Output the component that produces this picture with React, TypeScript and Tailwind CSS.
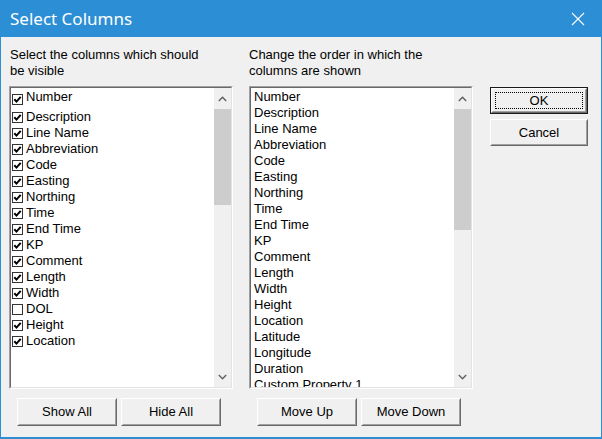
const leftItems: [string, boolean][] = [
  ["Number", true],
  ["Description", true],
  ["Line Name", true],
  ["Abbreviation", true],
  ["Code", true],
  ["Easting", true],
  ["Northing", true],
  ["Time", true],
  ["End Time", true],
  ["KP", true],
  ["Comment", true],
  ["Length", true],
  ["Width", true],
  ["DOL", false],
  ["Height", true],
  ["Location", true],
];

const rightItems = [
  "Number",
  "Description",
  "Line Name",
  "Abbreviation",
  "Code",
  "Easting",
  "Northing",
  "Time",
  "End Time",
  "KP",
  "Comment",
  "Length",
  "Width",
  "Height",
  "Location",
  "Latitude",
  "Longitude",
  "Duration",
  "Custom Property 1",
];

function Check({ on, first }: { on: boolean; first?: boolean }) {
  return (
    <div
      className={`w-[11px] h-[11px] border border-[#333] bg-white shrink-0 flex items-center justify-center ${
        first ? "mt-[5px]" : "mt-[3px]"
      }`}
    >
      {on && (
        <svg width="9" height="9" viewBox="0 0 9 9">
          <path d="M1.3 4.2 L3.5 6.6 L7.7 1.8" fill="none" stroke="#000" strokeWidth="2" />
        </svg>
      )}
    </div>
  );
}

function Scrollbar({ thumb }: { thumb: string }) {
  return (
    <div className="w-[17px] bg-[#f0f0f0] flex flex-col shrink-0">
      <div className="h-[21px] flex items-center justify-center">
        <svg width="9" height="6" viewBox="0 0 9 6">
          <path d="M0.8 5 L4.5 1.3 L8.2 5" fill="none" stroke="#606060" strokeWidth="1.4" />
        </svg>
      </div>
      <div className={`${thumb} bg-[#cdcdcd]`} />
      <div className="flex-1" />
      <div className="h-[21px] flex items-center justify-center">
        <svg width="9" height="6" viewBox="0 0 9 6">
          <path d="M0.8 1 L4.5 4.7 L8.2 1" fill="none" stroke="#606060" strokeWidth="1.4" />
        </svg>
      </div>
    </div>
  );
}

function ListBox({ children, thumb }: { children: React.ReactNode; thumb: string }) {
  return (
    <div className="w-[224px] h-[303px] border border-t-[#a0a0a0] border-l-[#a0a0a0] border-b-white border-r-white">
      <div className="h-full border border-t-[#696969] border-l-[#696969] border-b-[#e3e3e3] border-r-[#e3e3e3] flex">
        <div className="flex-1 bg-white overflow-hidden pt-[1px]">{children}</div>
        <Scrollbar thumb={thumb} />
      </div>
    </div>
  );
}

function Button({
  label,
  w,
  h,
  isDefault,
}: {
  label: string;
  w: string;
  h: string;
  isDefault?: boolean;
}) {
  const inner = (
    <div className="h-full border border-t-white border-l-white border-b-[#696969] border-r-[#696969]">
      <div className="h-full border border-t-[#f0f0f0] border-l-[#f0f0f0] border-b-[#a0a0a0] border-r-[#a0a0a0] bg-[#f0f0f0] flex items-center justify-center p-[2px]">
        <div
          className={`w-full h-full flex items-center justify-center ${
            isDefault ? "border border-dotted border-black" : ""
          }`}
        >
          {label}
        </div>
      </div>
    </div>
  );
  return (
    <div className={`${w} ${h} ${isDefault ? "border border-[#1a1a1a]" : ""}`}>{inner}</div>
  );
}

export default function App() {
  return (
    <div className="w-[602px] h-[439px] bg-[#2c8fd6] flex flex-col px-[1px] pb-[2px] font-['Liberation_Sans',Arial,sans-serif] text-[13px] leading-[16px] text-black">
      <div className="h-[37px] flex items-center justify-between pl-[9px] pr-[16px] shrink-0">
        <span className="text-white text-[17px] leading-[20px] font-['Noto_Sans','Liberation_Sans',sans-serif]">
          Select Columns
        </span>
        <svg width="14" height="14" viewBox="0 0 14 14">
          <path d="M1 1 L13 13 M13 1 L1 13" stroke="#fff" strokeWidth="1.1" />
        </svg>
      </div>
      <div className="flex-1 bg-[#f0f0f0] flex pl-[8px] pt-[10px]">
        <div className="flex flex-col w-[224px]">
          <div className="h-[32px] pl-[1px]">
            Select the columns which should
            <br />
            be visible
          </div>
          <div className="mt-[7px]">
            <ListBox thumb="h-[96px]">
              {leftItems.map(([name, on], i) => (
                <div
                  key={name}
                  className={`flex gap-[3px] pl-[1px] ${i === 0 ? "h-[20px]" : "h-[16px]"}`}
                >
                  <Check on={on} first={i === 0} />
                  <span>{name}</span>
                </div>
              ))}
            </ListBox>
          </div>
          <div className="flex gap-[4px] pl-[8px] mt-[9px]">
            <Button label="Show All" w="w-[100px]" h="h-[28px]" />
            <Button label="Hide All" w="w-[100px]" h="h-[28px]" />
          </div>
        </div>
        <div className="flex flex-col w-[224px] ml-[16px]">
          <div className="h-[32px]">
            Change the order in which the
            <br />
            columns are shown
          </div>
          <div className="mt-[7px]">
            <ListBox thumb="h-[121px]">
              {rightItems.map((name) => (
                <div key={name} className="h-[16px] pl-[3px] whitespace-nowrap">
                  {name}
                </div>
              ))}
            </ListBox>
          </div>
          <div className="flex gap-[4px] pl-[8px] mt-[9px]">
            <Button label="Move Up" w="w-[100px]" h="h-[28px]" />
            <Button label="Move Down" w="w-[100px]" h="h-[28px]" />
          </div>
        </div>
        <div className="flex flex-col gap-[5px] ml-[17px] pt-[40px]">
          <Button label="OK" w="w-[98px]" h="h-[27px]" isDefault />
          <Button label="Cancel" w="w-[98px]" h="h-[27px]" />
        </div>
      </div>
    </div>
  );
}
